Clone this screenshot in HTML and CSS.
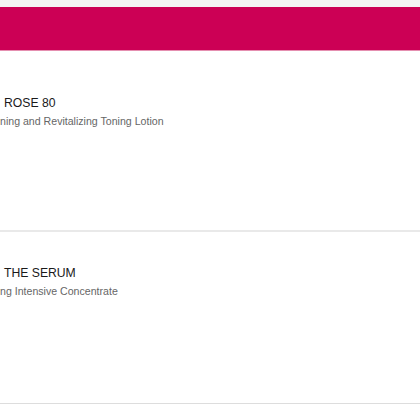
FILE: index.html
```html
<!DOCTYPE html>
<html>
<head>
<meta charset="utf-8">
<link rel="stylesheet" href="styles.css">
</head>
<body>
<div class="page">
  <header class="topbar"></header>
  <ul class="list">
    <li class="item item-first">
      <div class="title">ROSE 80</div>
      <div class="subtitle">ning and Revitalizing Toning Lotion</div>
    </li>
    <li class="item item-second">
      <div class="title">THE SERUM</div>
      <div class="subtitle">ng Intensive Concentrate</div>
    </li>
  </ul>
</div>
</body>
</html>
```
FILE: styles.css
```css
html, body {
  margin: 0;
  padding: 0;
}
body {
  background: #f4f4f4;
  font-family: "Liberation Sans", Arial, sans-serif;
  width: 420px;
  height: 420px;
  overflow: hidden;
}
.page {
  padding-top: 7px;
}
.topbar {
  height: 43px;
  background: #cc0055;
  border-bottom: 1px solid #e58fb0;
}
.list {
  list-style: none;
  margin: 0;
  padding: 0;
  background: #ffffff;
  height: 370px;
}
.item {
  box-sizing: border-box;
  background: #ffffff;
}
.item-first {
  height: 181px;
  padding-top: 44px;
  border-bottom: 2px solid #e9e9e9;
}
.item-second {
  height: 172px;
  padding-top: 33px;
  border-bottom: 1px solid #dddddd;
}
.title {
  font-size: 12.2px;
  line-height: 16px;
  color: #1a1a1a;
  padding-left: 4px;
}
.subtitle {
  font-size: 10.6px;
  line-height: 14px;
  color: #666666;
  margin-top: 3px;
}
```
